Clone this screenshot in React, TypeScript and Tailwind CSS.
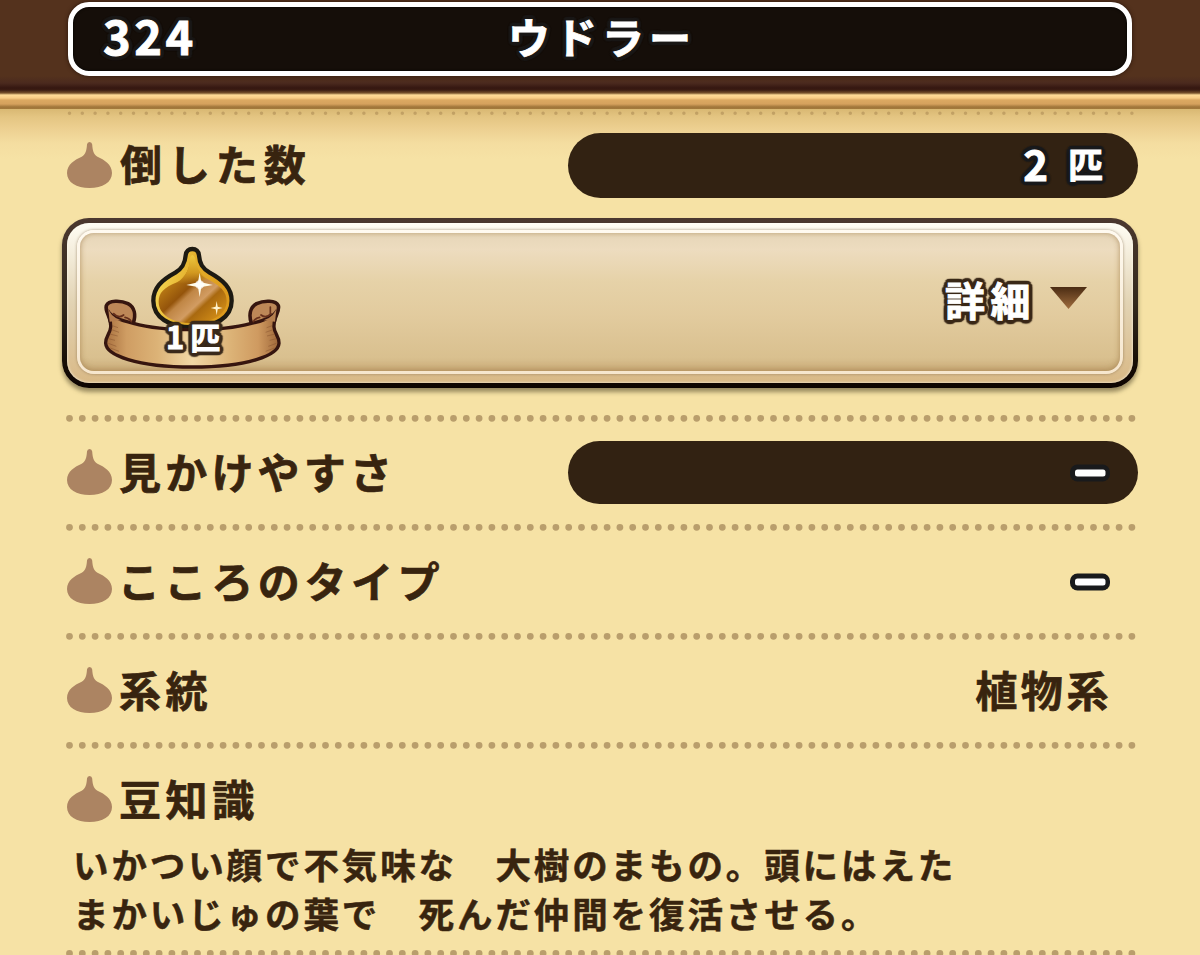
import type { ReactNode } from 'react';

// round outline built from a ring of shadows, colour comes from --o
const OUTLINE =
  '[-webkit-text-stroke:0.9px_#fff] [text-shadow:4px_0_1px_var(--o),3.7px_1.5px_1px_var(--o),2.8px_2.8px_1px_var(--o),1.5px_3.7px_1px_var(--o),0_4px_1px_var(--o),-1.5px_3.7px_1px_var(--o),-2.8px_2.8px_1px_var(--o),-3.7px_1.5px_1px_var(--o),-4px_0_1px_var(--o),-3.7px_-1.5px_1px_var(--o),-2.8px_-2.8px_1px_var(--o),-1.5px_-3.7px_1px_var(--o),0_-4px_1px_var(--o),1.5px_-3.7px_1px_var(--o),2.8px_-2.8px_1px_var(--o),3.7px_-1.5px_1px_var(--o)]';

function DropIcon() {
  return (
    <svg className="w-[45px] h-[46px] mb-px shrink-0" viewBox="0 0 45 46" fill="#ac8462">
      <path d="M20 2.5Q20.3 0 22.6 0Q24.9 0 25.2 2.5C25.7 8.5 26.2 12 30.5 14.7C37 17.8 45 22 45 31C45 40.5 35.5 46 22.5 46C9.5 46 0 40.5 0 31C0 22 8 17.8 14.7 14.7C19 12 19.5 8.5 20 2.5Z" />
    </svg>
  );
}

function DottedLine({ faint = false }: { faint?: boolean }) {
  return (
    <svg className={`block w-full h-2 shrink-0 ${faint ? 'opacity-35' : ''}`}>
      <line
        x1="7.5"
        y1="4.3"
        x2="1071"
        y2="4.3"
        stroke={faint ? '#8d6a3c' : '#b99e6c'}
        strokeWidth={faint ? 3.5 : 6.8}
        strokeLinecap="round"
        strokeDasharray="0 12.8"
      />
    </svg>
  );
}

interface RowProps {
  label: string;
  className?: string;
  labelClassName?: string;
  children?: ReactNode;
}

function Row({
  label,
  className = 'h-[101px]',
  labelClassName = 'ml-[7px] tracking-[4.6px]',
  children
}: RowProps) {
  return (
    <div className={`flex items-center pl-[5px] shrink-0 ${className}`}>
      <DropIcon />
      <span
        className={`mb-[4px] text-[42px] leading-[56px] whitespace-nowrap [-webkit-text-stroke:0.7px_#38240f] ${labelClassName}`}
      >
        {label}
      </span>
      <div className="ml-auto">{children}</div>
    </div>
  );
}

function Pill({ className, children }: { className: string; children: ReactNode }) {
  return (
    <div className={`w-[570px] rounded-full bg-[#322212] flex items-center justify-end text-white ${className}`}>
      {children}
    </div>
  );
}

function Dash() {
  return (
    <svg className="block w-[42px] h-[18px]" viewBox="0 0 42 18">
      <rect x="1" y="0.5" width="40" height="17" rx="7.5" fill="#191a1c" />
      <rect x="6" y="5.6" width="30.5" height="6.8" rx="2.5" fill="#fff" />
    </svg>
  );
}

function MedalIcon() {
  return (
    <svg className="block w-[180px] h-[127px]" viewBox="160 120 540 381">
      <defs>
        <linearGradient id="gold" gradientUnits="userSpaceOnUse" x1="350" y1="210" x2="490" y2="360">
          <stop offset="0" stopColor="#c98a18" />
          <stop offset="0.36" stopColor="#94540b" />
          <stop offset="0.44" stopColor="#c08645" />
          <stop offset="0.62" stopColor="#d29c62" />
          <stop offset="0.7" stopColor="#a9690f" />
          <stop offset="1" stopColor="#d48f18" />
        </linearGradient>
        <linearGradient id="goldRim" x1="0" y1="0" x2="1" y2="0.3">
          <stop offset="0" stopColor="#fbe562" />
          <stop offset="0.55" stopColor="#e3ae2a" />
          <stop offset="1" stopColor="#dd9a1c" />
        </linearGradient>
        <linearGradient id="neck" x1="0" y1="0" x2="0" y2="1">
          <stop offset="0" stopColor="#efca3f" />
          <stop offset="0.6" stopColor="#d39a20" />
          <stop offset="1" stopColor="#d39a20" stopOpacity="0" />
        </linearGradient>
        <linearGradient id="ribbon" x1="0" y1="0" x2="1" y2="0">
          <stop offset="0" stopColor="#a9713f" />
          <stop offset="0.12" stopColor="#cf9d63" />
          <stop offset="0.3" stopColor="#dcb377" />
          <stop offset="0.5" stopColor="#f1d8a6" />
          <stop offset="0.72" stopColor="#dcb377" />
          <stop offset="0.88" stopColor="#cf9a60" />
          <stop offset="1" stopColor="#9f6739" />
        </linearGradient>
      </defs>
      {/* gold drop */}
      <path
        d="M408 151C409 139 417 132 428 132C439 132 447 139 448 151C450 176 458 190 480 203C522 226 546 250 546 287C546 336 498 367 428 367C358 367 311 336 311 287C311 250 334 226 377 203C398 190 406 176 408 151Z"
        fill="url(#goldRim)"
        stroke="#1d1a12"
        strokeWidth="13"
      />
      <path
        d="M421 170C425 158 431 158 434 170C437 192 450 210 473 222C512 242 531 260 531 288C531 328 490 354 428 354C366 354 327 328 327 290C327 264 342 248 382 232C408 217 418 192 421 170Z"
        fill="url(#gold)"
      />
      <path d="M421 158Q428 142 436 158C438 186 452 206 474 222Q430 244 380 233C410 216 420 188 421 158Z" fill="url(#neck)" />
      <path d="M450 203L455 232L490 240L455 246L450 276L445 246L410 240L445 232Z" fill="#fffbe8" />
      <circle cx="450" cy="239" r="13" fill="#fff" opacity="0.75" />
      <path d="M501 288L504 305L519 309L504 313L501 331L498 313L483 309L498 305Z" fill="#fff4cf" />
      {/* ribbon scrolls */}
      <g stroke="#36150f" strokeWidth="11" strokeLinejoin="round" fill="#bd8757">
        <path d="M182 350C178 329 166 317 170 302C177 285 214 286 235 296C255 307 259 330 251 354L215 362Z" />
        <path d="M674 350C678 329 690 317 686 302C679 285 642 286 621 296C601 307 597 330 605 354L641 362Z" />
      </g>
      {/* ribbon band */}
      <path
        d="M175 318C178 335 184 350 183 366C182 386 167 394 168 415C170 450 260 486 428 486C596 486 686 450 688 415C689 394 674 386 673 366C672 350 678 335 681 318C672 335 640 349 605 355C565 366 500 374 428 374C356 374 291 366 251 355C216 347 184 335 175 318Z"
        fill="url(#ribbon)"
        stroke="#36150f"
        strokeWidth="10"
        strokeLinejoin="round"
      />
      <path d="M175 306Q180 335 214 346L180 350Z" fill="#b67f4f" />
      <path d="M681 306Q676 335 642 346L676 350Z" fill="#b67f4f" />
      <g fill="none" stroke="#66301c" strokeWidth="5" strokeLinecap="round">
        <path d="M192 326Q207 342 222 330M226 337Q240 340 245 350" />
        <path d="M664 326Q649 342 634 330M630 337Q616 340 611 350M662 306V328" />
      </g>
      <g stroke="#85502e" strokeWidth="2" opacity="0.7">
        <path d="M188 362L205 368M186 374L208 382M180 387L204 393M176 401L196 406M176 415L200 424M182 429L208 439" />
        <path d="M668 362L651 368M670 374L648 382M676 387L652 393M680 401L660 406M680 415L656 424M674 429L648 439" />
      </g>
    </svg>
  );
}

function DetailCard() {
  return (
    <div className="h-[170px] shrink-0 rounded-[27px] p-[5px] bg-linear-to-b from-[#4b382f] via-[#33291c] to-[#0d0502] shadow-[0_4px_4px_rgba(90,80,50,0.6)]">
      <div className="h-full rounded-[22px] px-[10px] pt-[7px] pb-[9px] bg-linear-to-b from-[#fffdf4] via-[#e2d3b3] to-[#d9b986] shadow-[inset_0_0_3px_rgba(255,255,245,0.9)]">
        <div className="h-full rounded-[17px] p-[3px] bg-linear-to-b from-[#fffaf0] to-[#f6e6cd] shadow-[0_0_3px_rgba(130,105,75,0.7)]">
          <div className="relative h-full rounded-[14px] flex items-center justify-end bg-[linear-gradient(to_bottom,#e6d6b8_0%,#eddcbf_12%,#e6d2a8_35%,#e2cb9e_60%,#d9c08f_90%,#cdb07e_100%)] shadow-[inset_0_-3px_6px_rgba(165,125,70,0.3),inset_0_0_5px_rgba(150,115,70,0.5)]">
            <div className="absolute left-[23px] top-[12px]">
              <MedalIcon />
              <span
                className={`absolute left-[63px] top-[68px] text-[31px] leading-[46px] text-white whitespace-nowrap [--o:#3b2b1c] ${OUTLINE}`}
              >
                1<span className="ml-[6px] text-[30px]">匹</span>
              </span>
            </div>
            <span
              className={`mb-[7px] text-[40px] leading-[56px] tracking-[5.5px] text-white [--o:#3a2818] ${OUTLINE}`}
            >
              詳細
            </span>
            <svg className="ml-[14px] mr-[33px] mb-[8px] w-[37px] h-[22px]" viewBox="0 0 37 22">
              <defs>
                <linearGradient id="arrow" x1="0" y1="0" x2="0" y2="1">
                  <stop offset="0" stopColor="#4b2c13" />
                  <stop offset="1" stopColor="#a06d3e" />
                </linearGradient>
              </defs>
              <path d="M0 0H37L18.5 22Z" fill="url(#arrow)" />
            </svg>
          </div>
        </div>
      </div>
    </div>
  );
}

function Header() {
  return (
    <header className="relative h-[109px] shrink-0 bg-[#54321d]">
      <div className="absolute inset-x-0 top-[76px] h-[33px] bg-[linear-gradient(to_bottom,#54321d_0px,#4b2a1e_7px,#351711_12px,#3b1c12_14px,#76512b_17px,#ffdc98_19px,#f8cd86_22px,#dca962_24px,#d5a15d_28px,#a0753a_31px,#a37a3c_33px)]" />
      <div className="relative mx-[68px] h-[76px] pt-[2px]">
        <div className="h-[74px] border-[5px] border-white rounded-[21px] bg-[#150e09] shadow-[0_0_4px_#2a160c,inset_0_0_3px_#000] flex items-center justify-center">
          <span
            className={`absolute left-[35px] top-[5px] text-[47px] leading-[60px] tracking-[3.5px] text-white [--o:#1a1817] ${OUTLINE}`}
          >
            324
          </span>
          <span
            className={`mb-[6px] pl-[4px] text-[42px] leading-[60px] tracking-[5px] text-white [--o:#1a1817] ${OUTLINE}`}
          >
            ウドラー
          </span>
        </div>
      </div>
    </header>
  );
}

export default function App() {
  return (
    <div className="w-[1200px] h-[955px] overflow-hidden flex flex-col bg-[#f6e2a5] text-[#38240f] font-bold font-['Noto_Sans_CJK_JP',sans-serif]">
      <Header />
      <main className="flex-1 flex flex-col px-[62px] bg-[linear-gradient(to_bottom,#d9b873_0px,#e4c582_8px,#edd091_20px,#f4dda0_34px,#f6e2a5_50px)]">
        <DottedLine faint />
        <Row label="倒した数" className="h-[96px]" labelClassName="ml-[8px] tracking-[5.9px]">
          <Pill className="h-[65px] pr-[35px]">
            <span className={`mb-[4px] text-[42px] leading-[56px] [--o:#191a1c] ${OUTLINE}`}>2</span>
            <span className={`mb-[4px] ml-[20px] text-[35px] leading-[56px] [--o:#191a1c] ${OUTLINE}`}>匹</span>
          </Pill>
        </Row>
        <div className="h-[5px] shrink-0" />
        <DetailCard />
        <div className="h-[26px] shrink-0" />
        <DottedLine />
        <Row label="見かけやすさ" labelClassName="ml-[7px] tracking-[4.2px]">
          <Pill className="h-[63px] pr-[27px]">
            <Dash />
          </Pill>
        </Row>
        <DottedLine />
        <Row label="こころのタイプ" labelClassName="ml-[6px] tracking-[4.6px]">
          <div className="pr-[27px]">
            <Dash />
          </div>
        </Row>
        <DottedLine />
        <Row label="系統">
          <span className="block mb-[4px] pr-[26px] text-[42px] leading-[56px] tracking-[3.6px] [-webkit-text-stroke:0.7px_#38240f]">
            植物系
          </span>
        </Row>
        <DottedLine />
        <Row label="豆知識" className="h-[93px] pt-[8px]" />
        <p className="-mt-[3px] mb-[3px] pl-[11px] text-[35.5px] leading-[49px] tracking-[2.9px] whitespace-pre shrink-0 [-webkit-text-stroke:0.5px_#38240f]">
          いかつい顔で不気味な　大樹のまもの。頭にはえた
          <br />
          まかいじゅの葉で　死んだ仲間を復活させる。
        </p>
        <div className="h-[9px] shrink-0" />
        <DottedLine />
      </main>
    </div>
  );
}
